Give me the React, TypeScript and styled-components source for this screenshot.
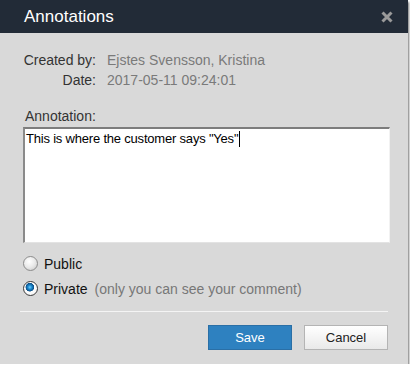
import React from 'react';
import styled, { createGlobalStyle } from 'styled-components';

const GlobalStyle = createGlobalStyle`
  body {
    margin: 0;
    background: #ffffff;
    font-family: "Liberation Sans", Arial, sans-serif;
  }
`;

const Dialog = styled.div`
  width: 408px;
  height: 364px;
  background: #d9d9d9;
  box-shadow: 1px 2px 2px rgba(0, 0, 0, 0.55);
  display: flex;
  flex-direction: column;
`;

const Header = styled.div`
  height: 33px;
  background: #222b37;
  display: flex;
  align-items: center;
  justify-content: space-between;
  padding: 0 15px 0 24px;
`;

const Title = styled.span`
  color: #ffffff;
  font-size: 17px;
`;

const Close = styled.svg`
  width: 12px;
  height: 12px;
`;

const Body = styled.div`
  padding: 17px 20px 0 23px;
  display: flex;
  flex-direction: column;
`;

const Meta = styled.div`
  display: grid;
  grid-template-columns: 73px auto;
  column-gap: 11px;
  font-size: 14px;
  line-height: 20px;
`;

const MetaLabel = styled.span`
  color: #333333;
  text-align: right;
`;

const MetaValue = styled.span`
  color: #7a7a7a;
`;

const FieldLabel = styled.div`
  margin-top: 16px;
  color: #333333;
  font-size: 14px;
  line-height: 20px;
  padding-left: 2px;
`;

const TextBox = styled.div`
  margin-top: 1px;
  height: 111px;
  width: 363px;
  background: #ffffff;
  border-top: 2px solid #7d7d7d;
  border-left: 2px solid #8a8a8a;
  border-right: 1px solid #f2f2f2;
  border-bottom: 1px solid #e3e3e3;
  padding: 2px 0 0 1px;
  box-sizing: content-box;
  font-size: 13px;
  letter-spacing: -0.2px;
  line-height: 16px;
  color: #000000;
`;

const Caret = styled.span`
  display: inline-block;
  width: 1px;
  height: 16px;
  background: #000;
  vertical-align: top;
  margin-left: 1px;
`;

const Options = styled.div`
  margin-top: 8px;
  display: flex;
  flex-direction: column;
`;

const RadioRow = styled.label`
  display: flex;
  align-items: center;
  height: 25px;
  font-size: 14px;
  color: #111;
`;

const RadioDot = styled.span<{ $checked?: boolean }>`
  width: 13px;
  height: 13px;
  border-radius: 50%;
  border: 1px solid ${p => (p.$checked ? '#3a3a3a' : '#8c8c8c')};
  background: ${p =>
    p.$checked
      ? 'radial-gradient(circle at 45% 40%, #6fd0ff 0, #1b8ad0 2px, #0b4f86 4px, #ffffff 4.6px, #ececec 100%)'
      : 'radial-gradient(circle at 40% 35%, #ffffff 0, #e9e9e9 50%, #c4c4c4 100%)'};
  margin-right: 6px;
  flex-shrink: 0;
`;

const Hint = styled.span`
  color: #777777;
  margin-left: 7px;
`;

const Divider = styled.hr`
  margin: 10px 0 0 -3px;
  width: 368px;
  border: none;
  border-top: 1px solid #f4f4f4;
  height: 0;
`;

const Footer = styled.div`
  display: flex;
  justify-content: flex-end;
  gap: 12px;
  margin-top: 13px;
`;

const Button = styled.button<{ $primary?: boolean }>`
  width: 84px;
  height: 25px;
  font-family: "Liberation Sans", Arial, sans-serif;
  font-size: 13px;
  cursor: pointer;
  border: 1px solid ${p => (p.$primary ? '#2a6fa6' : '#b4b4b4')};
  color: ${p => (p.$primary ? '#ffffff' : '#222222')};
  background: ${p =>
    p.$primary ? '#2e81c0' : 'linear-gradient(#ffffff, #e9e9e9)'};
  padding: 0;
`;

export default function App() {
  return (
    <>
      <GlobalStyle />
      <Dialog>
        <Header>
          <Title>Annotations</Title>
          <Close viewBox="0 0 12 12">
            <path d="M1.5 1.5 L10.5 10.5 M10.5 1.5 L1.5 10.5" stroke="#9a9a9a" strokeWidth="3" />
          </Close>
        </Header>
        <Body>
          <Meta>
            <MetaLabel>Created by:</MetaLabel>
            <MetaValue>Ejstes Svensson, Kristina</MetaValue>
            <MetaLabel>Date:</MetaLabel>
            <MetaValue>2017-05-11 09:24:01</MetaValue>
          </Meta>
          <FieldLabel>Annotation:</FieldLabel>
          <TextBox>
            This is where the customer says "Yes"<Caret />
          </TextBox>
          <Options>
            <RadioRow>
              <RadioDot />
              Public
            </RadioRow>
            <RadioRow>
              <RadioDot $checked />
              Private
              <Hint>(only you can see your comment)</Hint>
            </RadioRow>
          </Options>
          <Divider />
          <Footer>
            <Button $primary>Save</Button>
            <Button>Cancel</Button>
          </Footer>
        </Body>
      </Dialog>
    </>
  );
}
